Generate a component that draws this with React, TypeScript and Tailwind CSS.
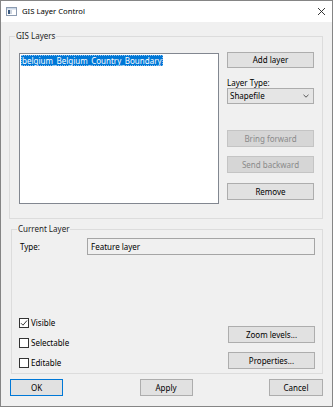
import React from "react";

function Btn({
  label,
  disabled = false,
  primary = false,
  className = "",
}: {
  label: string;
  disabled?: boolean;
  primary?: boolean;
  className?: string;
}) {
  const tone = disabled
    ? "bg-[#d6d6d6] border-[#c4c4c4] text-[#8a8a8a]"
    : primary
    ? "bg-[#e1e1e1] border-[#0078d7] text-black"
    : "bg-[#e1e1e1] border-[#adadad] text-black";
  return (
    <div
      className={`flex items-center justify-center border leading-none ${tone} ${className}`}
    >
      {label}
    </div>
  );
}

function Check({ label, checked = false }: { label: string; checked?: boolean }) {
  return (
    <div className="flex h-[12px] items-center gap-[2px]">
      <div className="flex h-[10px] w-[10px] items-center justify-center border border-[#333] bg-white">
        {checked && (
          <svg width="8" height="8" viewBox="0 0 8 8">
            <polyline
              points="1,4.2 3,6.2 7,1.5"
              fill="none"
              stroke="#222"
              strokeWidth="0.9"
            />
          </svg>
        )}
      </div>
      <span className="leading-none">{label}</span>
    </div>
  );
}

export default function App() {
  return (
    <div className="flex h-[407px] w-[333px] flex-col border border-[#858585] bg-[#f0f0f0] font-['Noto_Sans',sans-serif] text-[8px] text-black">
      {/* title bar */}
      <div className="flex h-[21px] shrink-0 items-center bg-white pl-[5px] pr-[6px]">
        <svg width="11" height="9" viewBox="0 0 11 9">
          <rect x="0.5" y="0.5" width="10" height="8" fill="#fff" stroke="#8c9bb0" />
          <rect x="1" y="1" width="9" height="1.5" fill="#c9d6e6" />
          <rect x="2" y="3" width="2" height="4" fill="#3b5a80" />
          <rect x="4.5" y="3" width="1" height="4" fill="#9aa9bd" />
        </svg>
        <span className="ml-[5px] text-[7.7px] leading-none">GIS Layer Control</span>
        <div className="flex-1" />
        <svg width="9" height="9" viewBox="0 0 9 9">
          <path d="M1 1 L8 8 M8 1 L1 8" stroke="#222" strokeWidth="0.9" />
        </svg>
      </div>

      {/* GIS Layers group */}
      <fieldset className="ml-[8px] mt-[8px] h-[189px] w-[314px] shrink-0 border border-[#dcdcdc]">
        <legend className="ml-[5px] px-[1px] leading-[12px] text-[#1e1e1e]">GIS Layers</legend>
        <div className="flex pl-[9px] pt-[10px]">
          <div className="mt-[1px] h-[151px] w-[200px] border border-[#828790] bg-white p-[1px]">
            <div className="inline-block h-[11px] bg-[#0078d7] px-[1px] leading-[11px] text-white outline-1 -outline-offset-1 outline-dotted outline-[#8cc0ef]">
              belgium_Belgium_Country_Boundary
            </div>
          </div>
          <div className="ml-[8px] flex w-[87px] flex-col">
            <Btn label="Add layer" className="h-[16px]" />
            <div className="mt-[9px] h-[11px] leading-[11px]">Layer Type:</div>
            <div className="flex h-[16px] items-center border border-[#acacac] bg-[#e5e5e5] pl-[2px] pr-[4px]">
              <span className="flex-1 leading-none">Shapefile</span>
              <svg width="6" height="4" viewBox="0 0 6 4">
                <polyline points="0.5,0.8 3,3.2 5.5,0.8" fill="none" stroke="#333" strokeWidth="0.8" />
              </svg>
            </div>
            <Btn label="Bring forward" disabled className="mt-[26px] h-[17px]" />
            <Btn label="Send backward" disabled className="mt-[9px] h-[17px]" />
            <Btn label="Remove" className="mt-[10px] h-[17px]" />
          </div>
        </div>
      </fieldset>

      {/* Current Layer group */}
      <fieldset className="ml-[10px] mt-[4px] h-[151px] w-[312px] shrink-0 border border-[#dcdcdc]">
        <legend className="ml-[5px] px-[1px] leading-[12px] text-[#1e1e1e]">Current Layer</legend>
        <div className="flex h-[138px] flex-col">
          <div className="mt-[3px] flex items-center pl-[8px]">
            <span className="w-[67px] leading-none">Type:</span>
            <div className="flex h-[17px] w-[228px] items-center border border-[#a5a5a5] bg-[#f0f0f0] pl-[3px] leading-none">
              Feature layer
            </div>
          </div>
          <div className="flex flex-1 items-end pb-[4px] pl-[7px] pr-[7px]">
            <div className="flex flex-col gap-[8px]">
              <Check label="Visible" checked />
              <Check label="Selectable" />
              <Check label="Editable" />
            </div>
            <div className="flex-1" />
            <div className="flex w-[87px] flex-col gap-[9px]">
              <Btn label="Zoom levels..." className="h-[17px]" />
              <Btn label="Properties..." className="h-[17px]" />
            </div>
          </div>
        </div>
      </fieldset>

      {/* dialog buttons */}
      <div className="mt-[5px] flex justify-between px-[9px]">
        <Btn label="OK" primary className="h-[17px] w-[53px]" />
        <Btn label="Apply" className="h-[17px] w-[53px]" />
        <Btn label="Cancel" className="h-[17px] w-[54px]" />
      </div>
    </div>
  );
}
